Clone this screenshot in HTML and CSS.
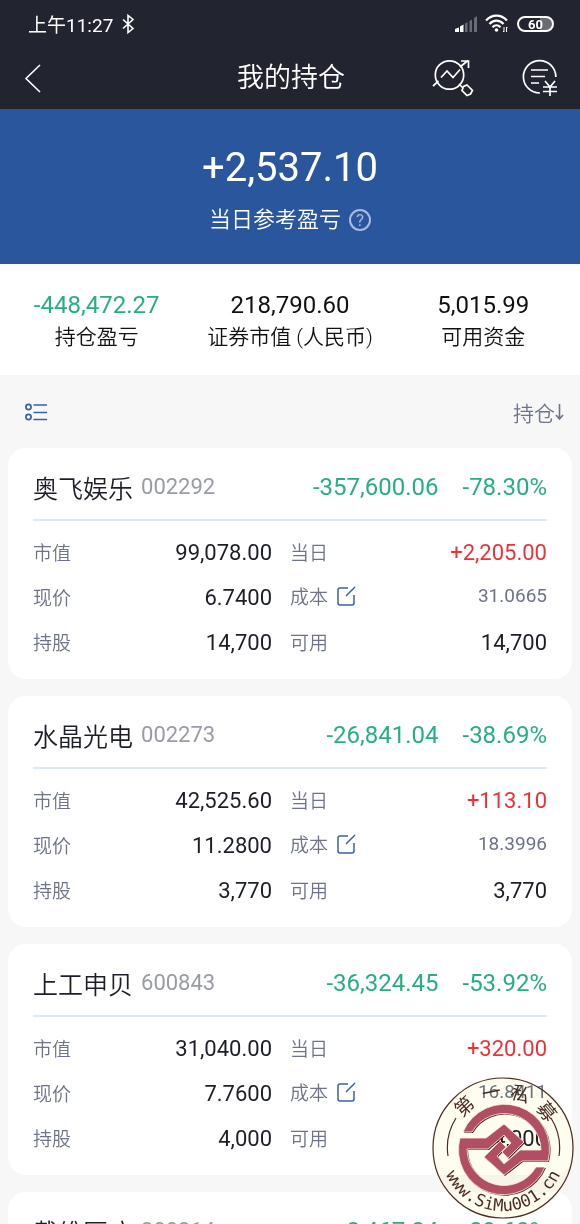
FILE: index.html
```html
<!DOCTYPE html>
<html lang="zh-CN">
<head>
    <meta charset="UTF-8">
    <meta name="viewport" content="width=device-width, initial-scale=1.0">
    <title>我的持仓</title>
    <link rel="stylesheet" href="styles.css">
</head>
<body>
    <div class="app">
        <!-- Status bar -->
        <div class="status-bar">
            <span class="status-time">上午11:27</span>
            <svg class="bluetooth" width="14" height="20" viewBox="0 0 14 20" fill="none" stroke="#fff" stroke-width="1.6">
                <path d="M2 5.5l10 9-5 4V1.5l5 4-10 9"/>
            </svg>
            <div class="status-icons">
                <svg width="22" height="16" viewBox="0 0 22 16">
                    <path fill="#fff" d="M0 13l4-1.5V16H0zM5 10.5l3.5-2V16H5z"/>
                    <path fill="#696c75" d="M10 7.5l2.5-1.5v10H10zM14.5 5l2.5-1.5V16h-2.5zM19 2l3-2v16h-3z"/>
                </svg>
                <svg width="24" height="20" viewBox="0 0 24 20" fill="none" stroke="#fff" stroke-width="2.2">
                    <path d="M1 6.5c6-6.5 15-6.5 21 0M4.5 10c4-4.5 10-4.5 14 0M7.5 13.2c2.5-2.6 5.5-2.6 8 0"/>
                    <circle cx="11.5" cy="16" r="1.8" fill="#fff" stroke="none"/>
                    <path stroke-width="1" d="M19 13v5l-1-1M21.5 18v-5l1 1"/>
                </svg>
                <span class="battery">60</span>
            </div>
        </div>

        <!-- Title bar -->
        <header class="nav">
            <button class="icon-button" type="button" aria-label="返回">
                <svg width="18" height="30" viewBox="0 0 18 30" fill="none" stroke="#fff" stroke-width="1.6">
                    <path d="M16 2L2 15.500 16 29"/>
                </svg>
            </button>
            <h1>我的持仓</h1>
            <div class="nav-actions">
                <button class="icon-button" type="button" aria-label="分析">
                    <svg width="42" height="38" viewBox="0 0 42 38" fill="none" stroke="#fff" stroke-width="1.7">
                        <circle cx="17.5" cy="16" r="14.2"/>
                        <path d="M9 18.5l6-6.5 6 6.500 7-8M28 8l8-6.500M29 2h7.500v7M1 27l5.500-5M27 25l4.500 4.500M35 26l5.500 5.500-2 3.500-3.500 1.500-5-5 1.500-4z"/>
                    </svg>
                </button>
                <button class="icon-button" type="button" aria-label="资金明细">
                    <svg width="36" height="38" viewBox="0 0 36 38" fill="none" stroke="#fff" stroke-width="1.7">
                        <path d="M33.8 18A16.200 16.200 0 1 0 18 34M9 11h17M9 17.500h14M9 24h8"/>
                        <path d="M23 22l5 6 5-6M28 28v9M21 28h14M21 32.500h14"/>
                    </svg>
                </button>
            </div>
        </header>

        <!-- Profit of the day -->
        <section class="today">
            <div class="today-value">+2,537.10</div>
            <div class="today-label">
                <span>当日参考盈亏</span>
                <button class="help" type="button" aria-label="说明">?</button>
            </div>
        </section>

        <!-- Account totals -->
        <section class="totals">
            <div class="total">
                <div class="total-value down">-448,472.27</div>
                <div class="total-label">持仓盈亏</div>
            </div>
            <div class="total">
                <div class="total-value">218,790.60</div>
                <div class="total-label">证券市值 (人民币)</div>
            </div>
            <div class="total">
                <div class="total-value">5,015.99</div>
                <div class="total-label">可用资金</div>
            </div>
        </section>

        <div class="toolbar">
            <button class="icon-button" type="button" aria-label="列表">
                <svg width="22" height="18" viewBox="0 0 22 18" fill="none" stroke="#3c62a3" stroke-width="1.7">
                    <circle cx="3.5" cy="4" r="2.6"/>
                    <circle cx="3.5" cy="14" r="2.6"/>
                    <path d="M8.5 2H22M8.5 9.500H22M8.5 16.500H22"/>
                </svg>
            </button>
            <button class="sort" type="button">持仓<svg width="9" height="18" viewBox="0 0 9 18" fill="none" stroke="currentColor" stroke-width="1.6">
                    <path d="M4.5 1v15M1 12l3.500 4L8 12"/>
                </svg>
            </button>
        </div>

        <!-- Positions -->
        <main class="positions">
            <article class="card">
                <div class="card-head">
                    <h2>奥飞娱乐</h2>
                    <span class="code">002292</span>
                    <span class="profit">-357,600.06</span>
                    <span class="percent">-78.30%</span>
                </div>
                <dl class="details">
                    <dt>市值</dt><dd>99,078.00</dd>
                    <dt>当日</dt><dd class="up">+2,205.00</dd>
                    <dt>现价</dt><dd>6.7400</dd>
                    <dt class="cost">成本 <button class="edit" type="button" aria-label="修改成本"><svg viewBox="0 0 20 20"><path d="M12 2H4Q2 2 2 4v13q0 2 2 2h12q2 0 2-2V9M10 10l9-9"/></svg></button></dt><dd class="cost">31.0665</dd>
                    <dt>持股</dt><dd>14,700</dd>
                    <dt>可用</dt><dd>14,700</dd>
                </dl>
            </article>

            <article class="card">
                <div class="card-head">
                    <h2>水晶光电</h2>
                    <span class="code">002273</span>
                    <span class="profit">-26,841.04</span>
                    <span class="percent">-38.69%</span>
                </div>
                <dl class="details">
                    <dt>市值</dt><dd>42,525.60</dd>
                    <dt>当日</dt><dd class="up">+113.10</dd>
                    <dt>现价</dt><dd>11.2800</dd>
                    <dt class="cost">成本 <button class="edit" type="button" aria-label="修改成本"><svg viewBox="0 0 20 20"><path d="M12 2H4Q2 2 2 4v13q0 2 2 2h12q2 0 2-2V9M10 10l9-9"/></svg></button></dt><dd class="cost">18.3996</dd>
                    <dt>持股</dt><dd>3,770</dd>
                    <dt>可用</dt><dd>3,770</dd>
                </dl>
            </article>

            <article class="card">
                <div class="card-head">
                    <h2>上工申贝</h2>
                    <span class="code">600843</span>
                    <span class="profit">-36,324.45</span>
                    <span class="percent">-53.92%</span>
                </div>
                <dl class="details">
                    <dt>市值</dt><dd>31,040.00</dd>
                    <dt>当日</dt><dd class="up">+320.00</dd>
                    <dt>现价</dt><dd>7.7600</dd>
                    <dt class="cost">成本 <button class="edit" type="button" aria-label="修改成本"><svg viewBox="0 0 20 20"><path d="M12 2H4Q2 2 2 4v13q0 2 2 2h12q2 0 2-2V9M10 10l9-9"/></svg></button></dt><dd class="cost">16.8411</dd>
                    <dt>持股</dt><dd>4,000</dd>
                    <dt>可用</dt><dd>4,000</dd>
                </dl>
            </article>

            <article class="card">
                <div class="card-head">
                    <h2>戴维医疗</h2>
                    <span class="code">300314</span>
                    <span class="profit">-8,467.24</span>
                    <span class="percent">-29.60%</span>
                </div>
            </article>
        </main>

        <!-- Round site seal in the corner: see-through paper, then the emblem -->
        <div class="seal seal-paper"></div>
        <svg class="seal" viewBox="0 0 142 142">
            <defs>
                <path id="seal-top" d="M21 71a50 50 0 0 1 100 0"/>
                <path id="seal-bottom" d="M71 8a63 63 0 0 0 0 126a63 63 0 0 0 0-126"/>
                <path id="seal-half" d="M28 61H54L72 47 92 65 76 81 70 75 79 66 72 58 56 72H35A37 37 0 0 0 104 90H113A45 45 0 0 1 28 61z"/>
            </defs>
            <circle cx="71" cy="71" r="70" fill="none" stroke="#4a2c22" stroke-width="1.2"/>
            <path d="M16 79A56 56 0 0 1 24 41M119 41A56 56 0 0 1 127 79" fill="none" stroke="#4a2c22" stroke-width="1.2"/>
            <g fill="#57242f" transform="translate(1 1)">
                <use href="#seal-half"/>
                <use href="#seal-half" transform="rotate(180 72 72.5)"/>
            </g>
            <g fill="#b14e63" stroke="#fff6dc" stroke-width="0.8">
                <path d="M28 61H54L72 47 92 65 76 81 70 75 79 66 72 58 56 72H35A37 37 0 0 0 104 90H113A45 45 0 0 1 28 61z"/>
                <use href="#seal-half" transform="rotate(180 72 72.5)"/>
            </g>
            <text class="seal-name"><textPath href="#seal-top" startOffset="41">第</textPath></text>
            <text class="seal-name"><textPath href="#seal-top" startOffset="68">一</textPath></text>
            <text class="seal-name"><textPath href="#seal-top" startOffset="94">私</textPath></text>
            <text class="seal-name"><textPath href="#seal-top" startOffset="122">募</textPath></text>
            <text class="seal-url"><textPath href="#seal-bottom" startOffset="50%">www.SiMu001.cn</textPath></text>
        </svg>
    </div>
</body>
</html>
```
FILE: styles.css
```css
* {
    box-sizing: border-box;
}

body {
    margin: 0;
    font-family: Roboto, "Noto Sans CJK SC", sans-serif;
    background-color: #f7f7f7;
    color: #1d1f28;
}

h1, h2, dl, dt, dd {
    margin: 0;
    font-weight: 350;
}

button {
    padding: 0;
    border: none;
    background: none;
    font-family: inherit;
    color: inherit;
}

svg {
    display: block;
}

.app {
    position: relative;
    display: flex;
    flex-direction: column;
    height: 100vh;
    overflow: hidden;
}

.status-bar {
    display: flex;
    align-items: center;
    flex-shrink: 0;
    height: 47px;
    padding: 0 26px 0 28px;
    background-color: #22252f;
    color: #fff;
}

.status-time {
    font-size: 19px;
}

.bluetooth {
    margin-left: 8px;
}

.status-icons {
    display: flex;
    align-items: center;
    gap: 8px;
    margin-left: auto;
}

.battery {
    width: 37px;
    height: 16px;
    border: 2px solid #fff;
    border-radius: 8px;
    background: linear-gradient(to right, #22252f 65%, #696c75 65%);
    font-size: 13px;
    font-weight: 700;
    line-height: 13px;
    text-align: center;
}

.nav {
    display: grid;
    grid-template-columns: 1fr auto 1fr;
    align-items: center;
    flex-shrink: 0;
    height: 62px;
    padding: 0 22px 0 24px;
    background-color: #22252f;
    color: #fff;
}

.nav h1 {
    font-size: 27px;
    line-height: 40px;
}

.nav-actions {
    display: flex;
    justify-content: flex-end;
    gap: 48px;
}

.icon-button {
    justify-self: start;
}

.today {
    flex-shrink: 0;
    height: 155px;
    padding-top: 35px;
    background-color: #29569d;
    color: #fff;
    text-align: center;
}

.today-value {
    font-size: 40px;
    line-height: 48px;
}

.today-label {
    display: flex;
    justify-content: center;
    align-items: center;
    gap: 8px;
    margin-top: 12px;
    font-size: 22px;
    font-weight: 350;
    line-height: 32px;
}

.help {
    width: 22px;
    height: 22px;
    border: 2px solid #a9bbe0;
    border-radius: 50%;
    color: #a9bbe0;
    font-size: 17px;
    line-height: 18px;
}

.totals {
    display: grid;
    grid-template-columns: repeat(3, 1fr);
    flex-shrink: 0;
    height: 111px;
    padding-top: 25px;
    background-color: #fff;
    color: #111;
    text-align: center;
}

.total-value {
    font-size: 24px;
    line-height: 32px;
}

.total-label {
    font-size: 21px;
    font-weight: 350;
    line-height: 32px;
}

.toolbar {
    display: flex;
    justify-content: space-between;
    align-items: center;
    flex-shrink: 0;
    height: 73px;
    padding: 0 16px 0 25px;
}

.sort {
    display: flex;
    align-items: center;
    color: #6d7489;
    font-size: 21px;
    font-weight: 350;
}

.positions {
    display: flex;
    flex-direction: column;
    flex: 1;
    gap: 17px;
    min-height: 0;
    padding: 0 8px;
    overflow-y: auto;
    scrollbar-width: none;
}

.card {
    flex-shrink: 0;
    padding: 0 25px 14px;
    border-radius: 18px;
    background-color: #fff;
}

.card-head {
    display: flex;
    align-items: center;
    height: 73px;
    padding-top: 6px;
    border-bottom: 2px solid #dde9f2;
}

.card-head h2 {
    font-size: 25px;
}

.code {
    margin-left: 8px;
    color: #999ca6;
    font-size: 22px;
}

.profit,
.percent {
    color: #27ae87;
    font-size: 24px;
}

.profit {
    margin-left: auto;
}

.percent {
    margin-left: 24px;
}

.details {
    display: grid;
    grid-template-columns: 86px 153px 86px 1fr;
    grid-auto-rows: 45px;
    align-items: center;
    padding-top: 9px;
}

.details dt {
    display: flex;
    align-items: center;
    gap: 8px;
    padding-bottom: 2px;
    color: #6d7489;
    font-size: 19px;
}

.details dt:nth-of-type(even) {
    padding-left: 18px;
}

.details dd {
    font-size: 22px;
    font-weight: 400;
    text-align: right;
}

.details .cost {
    padding-bottom: 4px;
    color: #6d7489;
    font-size: 19px;
}

.edit svg {
    width: 20px;
    height: 20px;
    fill: none;
    stroke: #3c62a3;
    stroke-width: 1.5;
}

.down {
    color: #27ae87;
}

.details .up {
    color: #ee3138;
}

.seal {
    position: absolute;
    right: 6px;
    bottom: 5px;
    width: 142px;
    height: 142px;
}

.seal-paper {
    border-radius: 50%;
    background-color: #fffdf0;
    mix-blend-mode: multiply;
}

.seal-name,
.seal-url {
    fill: #4a2c22;
    text-anchor: middle;
}

.seal-name {
    font-family: "Noto Sans CJK SC", sans-serif;
    font-size: 19px;
}

.seal-url {
    font-family: "DejaVu Sans Mono", monospace;
    font-size: 17px;
}
```
